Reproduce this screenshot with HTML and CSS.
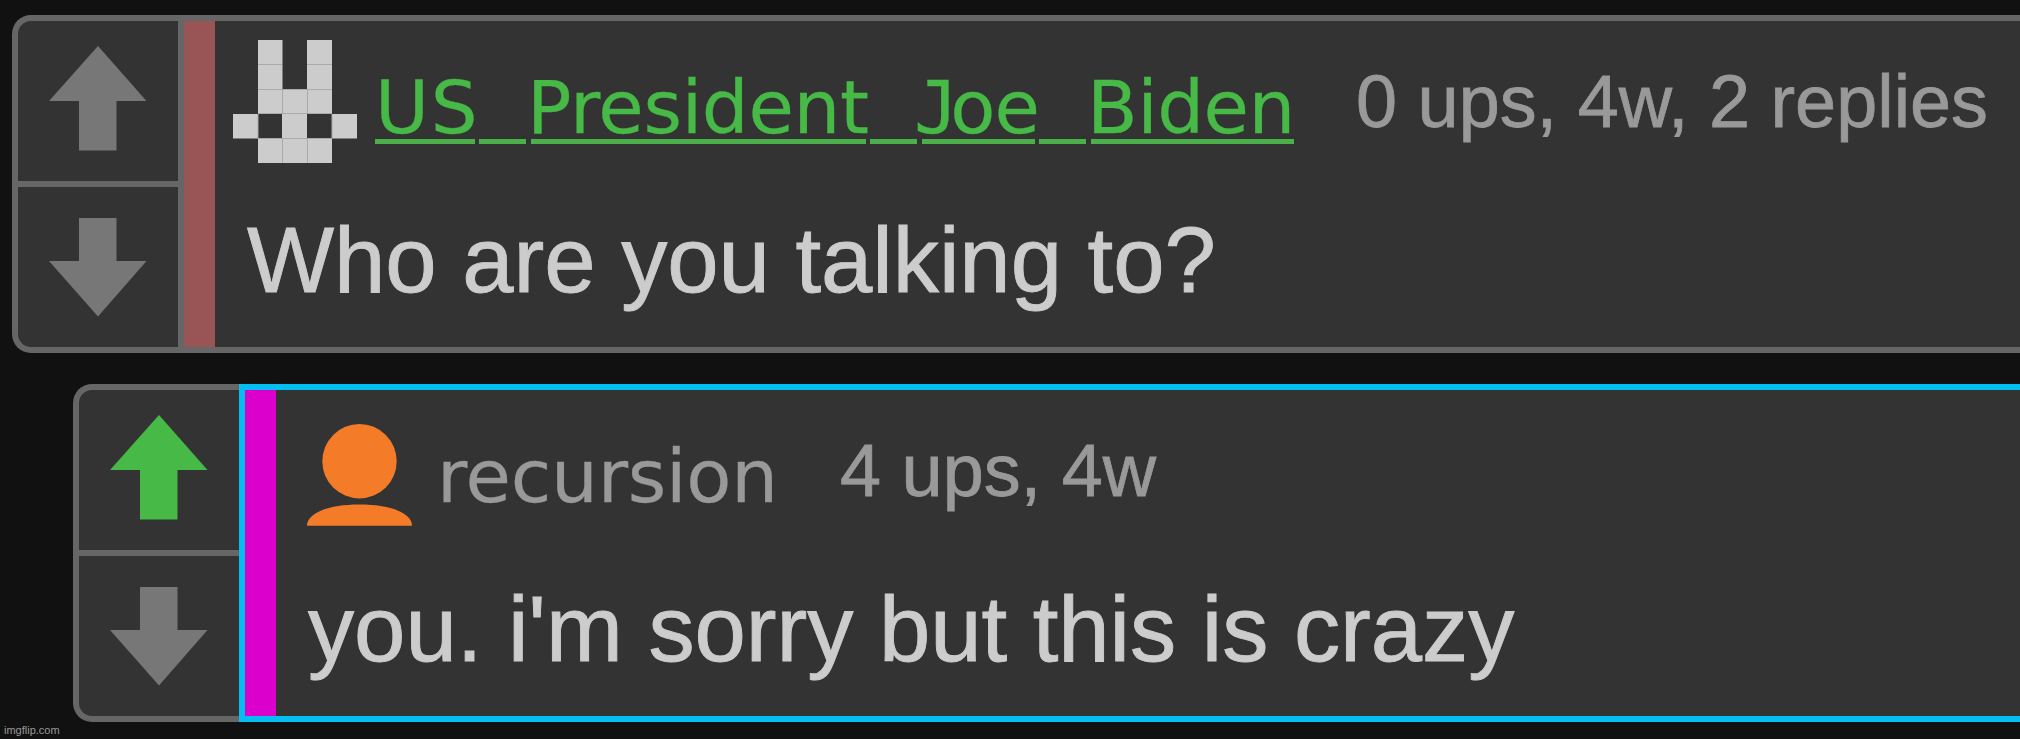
FILE: index.html
```html
<!DOCTYPE html>
<html lang="en">
<head>
<meta charset="utf-8">
<title>Comments</title>
<link rel="stylesheet" href="styles.css">
</head>
<body>
<main class="thread">
  <article class="comment">
    <div class="votes">
      <button class="vote" aria-label="Upvote"><svg class="arrow" viewBox="0 0 98 106"><path d="M49 0 97.5 55H67.5V104.5H30V55H0Z"/></svg></button>
      <button class="vote vote-down" aria-label="Downvote"><svg class="arrow" viewBox="0 0 98 106"><path d="M30 0H67.5V43H97.5L49 98.500 0 43H30Z"/></svg></button>
    </div>
    <div class="content">
      <header class="head">
        <svg class="rabbit" viewBox="0 0 124 124">
          <path fill="#ccc" d="M25 0H49.500V49H74V0H99V74H124V98.500H99V123H25V98.500H0V74H25Z"/>
          <path fill="#333" d="M25 74H49V98H25ZM74 74H99V98H74Z"/>
          <path stroke="#aaa" fill="none" d="M25 24.500H49M74 24.500H99M25 49.500H99M25 73.500H99M25 98.500H99M49.500 49V74M49.500 98V123M74.500 49V74M74.500 98V123M25 74V98M99 74V98"/>
        </svg>
        <a class="user link"><span class="word us">US</span><span class="bar">_</span><span class="word president">President</span><span class="bar">_</span><span class="word joe"><span class="j">J</span>oe</span><span class="bar">_</span><span class="word biden">Biden</span></a>
        <span class="meta">0 ups, 4w, 2 replies</span>
      </header>
      <p class="text">Who are you talking to?</p>
    </div>
  </article>
  <article class="comment reply">
    <div class="votes">
      <button class="vote voted" aria-label="Upvote"><svg class="arrow" viewBox="0 0 98 106"><path d="M49 0 97.5 55H67.5V104.5H30V55H0Z"/></svg></button>
      <button class="vote vote-down" aria-label="Downvote"><svg class="arrow" viewBox="0 0 98 106"><path d="M30 0H67.5V43H97.5L49 98.500 0 43H30Z"/></svg></button>
    </div>
    <div class="content">
      <header class="head">
        <svg class="person" viewBox="0 0 105 102"><circle cx="52.500" cy="37.200" r="37.200"/><path d="M0 101.700C0 91 17 80.500 52.500 80.500S105 91 105 101.700Z"/></svg>
        <span class="user plain">recursion</span>
        <span class="meta">4 ups, 4w</span>
      </header>
      <p class="text">you. i'm sorry but this is crazy</p>
    </div>
  </article>
</main>
<footer class="mark">imgflip.com</footer>
</body>
</html>
```
FILE: styles.css
```css
* { box-sizing: border-box; }
body {
  margin: 0;
  width: 2020px;
  height: 739px;
  overflow: hidden;
  background: #111;
  font-family: "Liberation Sans", Arial, sans-serif;
}
.thread {
  display: flex;
  flex-direction: column;
  gap: 31px;
  padding: 15px 0 0 12px;
}
.comment {
  display: flex;
  height: 338px;
}
.reply { margin-left: 61px; }
.votes {
  display: flex;
  flex-direction: column;
  flex: none;
  width: 166px;
  border: 6px solid #666;
  border-right: 0;
  border-radius: 19px 0 0 19px;
  background: #333;
}
.vote {
  display: flex;
  flex: none;
  height: 160px;
  padding: 25px 0 0 31px;
  border: 0;
  background: none;
}
.vote-down {
  height: 166px;
  border-top: 6px solid #666;
  padding-top: 31px;
}
.arrow { width: 98px; height: 106px; fill: #777; }
.voted .arrow { fill: #46b946; }
.content {
  flex: 1;
  min-width: 0;
  border: 6px solid #666;
  border-right: 0;
  background: linear-gradient(90deg, #955 31px, #333 31px);
}
.reply .content {
  border-color: #04bef2;
  background: linear-gradient(90deg, #dc00cc 31px, #333 31px);
}
.head {
  display: flex;
  align-items: flex-start;
  height: 185px;
  padding-left: 49px;
}
.reply .head { padding-left: 62px; }
.rabbit { flex: none; width: 124px; height: 124px; margin: 19px 18px 0 0; }
.person { flex: none; width: 105px; height: 102px; margin: 34px 25px 0 0; fill: #f47b27; }
.user {
  display: flex;
  flex: none;
  margin-top: 42.500px;
  font: 73.830px/86px "DejaVu Sans", Verdana, sans-serif;
  -webkit-text-stroke: 0.300px;
  white-space: nowrap;
}
.link { width: 920px; height: 80px; color: #46b946; }
.word, .bar {
  display: block;
  flex: none;
  height: 80px;
  border-bottom: 5px solid #4cb04a;
}
.us { width: 100px; letter-spacing: 0.024em; }
.bar { width: 47px; margin: 0 5px 0 4px; color: transparent; }
.president { width: 335px; letter-spacing: -0.004em; text-indent: -4px; }
.joe { width: 113px; text-indent: -8px; letter-spacing: -0.012em; }
.j { font-family: "DejaVu Sans Mono", monospace; letter-spacing: -0.110em; }
.biden { width: 203px; letter-spacing: -0.007em; text-indent: -4px; }
.plain { width: 343px; margin-top: 43px; color: #999; letter-spacing: -0.003em; }
.meta {
  flex: none;
  margin: 38px 0 0 61px;
  font-size: 73.830px;
  line-height: 86px;
  color: #999;
  -webkit-text-stroke: 0.800px #999;
  white-space: nowrap;
}
.reply .meta { margin-left: 60px; }
.text {
  margin: 0;
  padding-left: 63px;
  font-size: 92.300px;
  line-height: 109px;
  letter-spacing: -0.040px;
  color: #ccc;
  -webkit-text-stroke: 0.900px #ccc;
  white-space: nowrap;
}
.mark {
  position: absolute;
  left: 4px;
  bottom: 2px;
  font-size: 11px;
  line-height: 13px;
  color: #999;
}
```
